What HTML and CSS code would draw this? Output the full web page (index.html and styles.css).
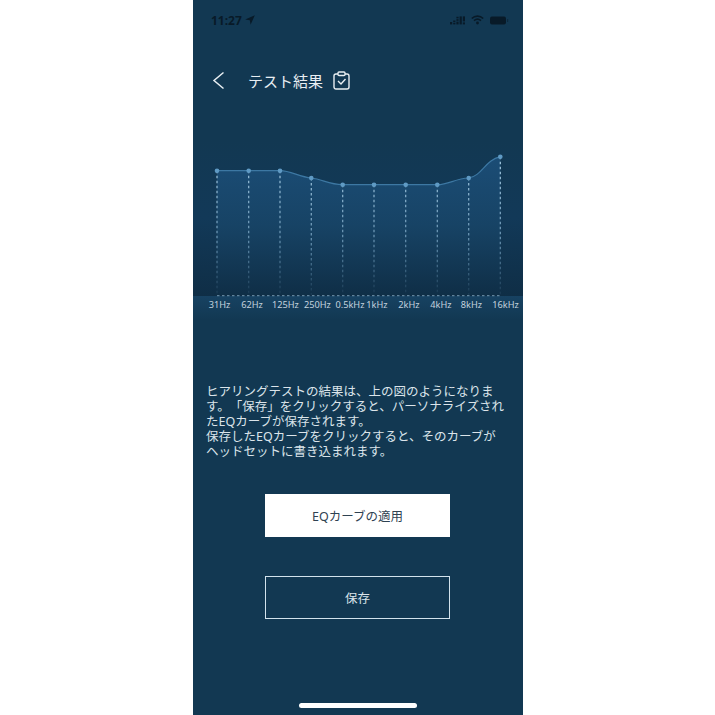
FILE: index.html
```html
<!DOCTYPE html>
<html lang="ja">
<head>
  <meta charset="UTF-8">
  <title>テスト結果</title>
  <link rel="stylesheet" href="styles.css">
</head>
<body>
  <div class="phone">
    <div class="status-bar">
      <div class="status-left">
        <span class="time">11:27</span>
        <svg class="status-icon" width="10" height="10" viewBox="0 0 10 10"><path d="M9.8 0.2 L0.2 4.4 L4.8 5.2 L5.6 9.8 Z"/></svg>
      </div>
      <div class="status-right">
        <svg class="status-icon" width="15" height="9" viewBox="0 0 15 9">
          <rect x="0" y="6" width="2.2" height="2.4"/><rect x="3.2" y="4.5" width="2.2" height="1.6"/><rect x="3.2" y="6.8" width="2.2" height="1.6"/>
          <rect x="6.4" y="0.8" width="2.2" height="1.6"/><rect x="6.4" y="3.2" width="2.2" height="1.6"/><rect x="6.4" y="5.6" width="2.2" height="2.8"/>
          <rect x="9.6" y="0.4" width="2.2" height="8"/><rect x="12.8" y="0.4" width="2.2" height="5"/><rect x="12.8" y="6.4" width="2.2" height="2"/>
        </svg>
        <svg class="wifi" width="13" height="10" viewBox="0 0 13 10">
          <path d="M0.8 3.5 C4 0.4 9 0.4 12.2 3.5"/><path d="M3 5.6 C5 3.9 8 3.9 10 5.6"/><circle class="wifi-dot" cx="6.5" cy="8" r="1.4"/>
        </svg>
        <svg class="status-icon" width="19" height="9" viewBox="0 0 19 9"><rect x="0" y="0.5" width="16" height="8" rx="2"/><rect x="17" y="3" width="1.2" height="3" rx="0.5" opacity="0.5"/></svg>
      </div>
    </div>

    <div class="nav-bar">
      <svg class="back" width="13" height="19" viewBox="0 0 13 19"><path d="M11.5 1.5 L2 9.5 L11.5 17.5"/></svg>
      <span class="title">テスト結果</span>
      <svg class="clipboard" width="17" height="19" viewBox="0 0 17 19">
        <rect x="1" y="3" width="15" height="15" rx="2"/>
        <rect class="clip" x="5" y="1" width="7" height="3.5" rx="1"/>
        <path d="M5 10 L8 13 L12.5 8"/>
      </svg>
    </div>

    <svg class="chart" width="330" height="180" viewBox="0 0 330 180">
      <defs>
        <linearGradient id="bg-fade" x1="0" y1="0" x2="0" y2="1">
          <stop offset="0" stop-color="#123852"/>
          <stop offset="0.5" stop-color="#123958"/>
          <stop offset="1" stop-color="#0f2e46"/>
        </linearGradient>
        <linearGradient id="area-fade" gradientUnits="userSpaceOnUse" x1="0" y1="16" x2="0" y2="156">
          <stop offset="0" stop-color="#1b4d76"/>
          <stop offset="0.5" stop-color="#174365"/>
          <stop offset="1" stop-color="#0f2e46"/>
        </linearGradient>
        <linearGradient id="line-fade" gradientUnits="userSpaceOnUse" x1="0" y1="20" x2="0" y2="156">
          <stop offset="0" stop-color="#a9cfe6"/>
          <stop offset="0.55" stop-color="#6f9ab8"/>
          <stop offset="1" stop-color="#6f9ab8" stop-opacity="0.08"/>
        </linearGradient>
        <linearGradient id="band-fade" x1="0" y1="0" x2="0" y2="1">
          <stop offset="0" stop-color="#174262"/>
          <stop offset="1" stop-color="#123852"/>
        </linearGradient>
      </defs>

      <rect width="330" height="156" fill="url(#bg-fade)"/>
      <rect y="156" width="330" height="24" fill="url(#band-fade)"/>

      <path d="M24 30.7 L87 30.7 C98 30.7 106 37 118.3 38 C130 39.5 136 44.7 149.7 44.7 L244.3 44.7 C256 44.7 262 38.5 275.7 38 C289 36 292 20 307.3 16.7 L307.3 156 L24 156 Z" fill="url(#area-fade)"/>
      <path class="curve" d="M24 30.7 L87 30.7 C98 30.7 106 37 118.3 38 C130 39.5 136 44.7 149.7 44.7 L244.3 44.7 C256 44.7 262 38.5 275.7 38 C289 36 292 20 307.3 16.7"/>

      <path class="drop" stroke="url(#line-fade)" d="M24 30.7 V156 M55.7 30.7 V156 M87 30.7 V156 M118.3 38 V156 M149.7 44.7 V156 M181 44.7 V156 M212.7 44.7 V156 M244.3 44.7 V156 M275.7 38 V156 M307.3 16.7 V156"/>
      <line class="base" x1="24" y1="155.7" x2="307.3" y2="155.7"/>

      <g class="dots">
        <circle cx="24" cy="30.7" r="2.3"/><circle cx="55.7" cy="30.7" r="2.3"/><circle cx="87" cy="30.7" r="2.3"/><circle cx="118.3" cy="38" r="2.3"/><circle cx="149.7" cy="44.7" r="2.3"/>
        <circle cx="181" cy="44.7" r="2.3"/><circle cx="212.7" cy="44.7" r="2.3"/><circle cx="244.3" cy="44.7" r="2.3"/><circle cx="275.7" cy="38" r="2.3"/><circle cx="307.3" cy="16.7" r="2.3"/>
      </g>

      <g class="freq">
        <text x="26.5" y="168">31Hz</text><text x="59" y="168">62Hz</text><text x="92.5" y="168">125Hz</text><text x="124.5" y="168">250Hz</text><text x="157" y="168">0.5kHz</text>
        <text x="184" y="168">1kHz</text><text x="216" y="168">2kHz</text><text x="248" y="168">4kHz</text><text x="278.5" y="168">8kHz</text><text x="312.5" y="168">16kHz</text>
      </g>
    </svg>

    <p class="message">ヒアリングテストの結果は、上の図のようになります。「保存」をクリックすると、パーソナライズされたEQカーブが保存されます。<br>保存したEQカーブをクリックすると、そのカーブがヘッドセットに書き込まれます。</p>

    <div class="actions">
      <button class="btn btn-solid">EQカーブの適用</button>
      <button class="btn btn-outline">保存</button>
    </div>

    <div class="home-indicator"></div>
  </div>
</body>
</html>
```

FILE: styles.css
```css
body {
  margin: 0;
  background: #fff;
  display: flex;
  justify-content: center;
  font-family: "Noto Sans", "Noto Sans CJK JP", sans-serif;
}

.phone {
  width: 330px;
  height: 715px;
  margin-left: 1px;
  background: #123852;
  display: flex;
  flex-direction: column;
}

/* status bar */
.status-bar {
  height: 40px;
  padding: 0 14px 0 18px;
  display: flex;
  justify-content: space-between;
  align-items: center;
}

.status-left,
.status-right {
  display: flex;
  align-items: center;
}

.status-left {
  gap: 3px;
}

.status-right {
  gap: 6px;
}

.time {
  font-size: 12px;
  font-weight: 700;
  color: #081a28;
}

.status-icon {
  fill: #081a28;
}

.wifi {
  fill: none;
  stroke: #081a28;
  stroke-width: 1.7;
}

.wifi-dot {
  fill: #081a28;
  stroke: none;
}

/* nav */
.nav-bar {
  height: 40px;
  margin-top: 20px;
  padding-left: 19px;
  display: flex;
  align-items: center;
}

.back {
  fill: none;
  stroke: #e8eef2;
  stroke-width: 1.5;
}

.title {
  margin-left: 23px;
  font-size: 15px;
  color: #e8eef2;
}

.clipboard {
  margin-left: 10px;
  fill: none;
  stroke: #e8eef2;
  stroke-width: 1.4;
}

.clip {
  fill: #123852;
}

/* chart */
.chart {
  display: block;
  margin-top: 40px;
}

.curve {
  fill: none;
  stroke: #3d78a3;
  stroke-width: 1.2;
}

.drop {
  fill: none;
  stroke-width: 1.2;
  stroke-dasharray: 2.5 2.5;
}

.base {
  stroke: #8fb2ca;
  stroke-width: 0.8;
  stroke-dasharray: 2.5 2.5;
}

.dots {
  fill: #5f9ac4;
}

.freq {
  font-size: 9.2px;
  fill: #c3d2de;
  text-anchor: middle;
}

/* text */
.message {
  width: 302px;
  margin: 64px 0 0 13px;
  font-size: 12.5px;
  line-height: 15px;
  color: #dbe4ea;
  text-spacing-trim: space-all;
}

/* buttons */
.actions {
  margin-top: 35px;
  padding-right: 1px;
  display: flex;
  flex-direction: column;
  align-items: center;
  gap: 39px;
}

.btn {
  width: 185px;
  height: 43px;
  padding: 0 0 1px;
  border-radius: 0;
  font-family: inherit;
  font-size: 12.5px;
}

.btn-solid {
  background: #fff;
  border: none;
  color: #2f4252;
}

.btn-outline {
  background: transparent;
  border: 1px solid #d2e2ec;
  color: #dbe4ea;
}

/* home indicator */
.home-indicator {
  width: 118px;
  height: 5px;
  margin: auto auto 7px;
  border-radius: 3px;
  background: #fff;
}
```
